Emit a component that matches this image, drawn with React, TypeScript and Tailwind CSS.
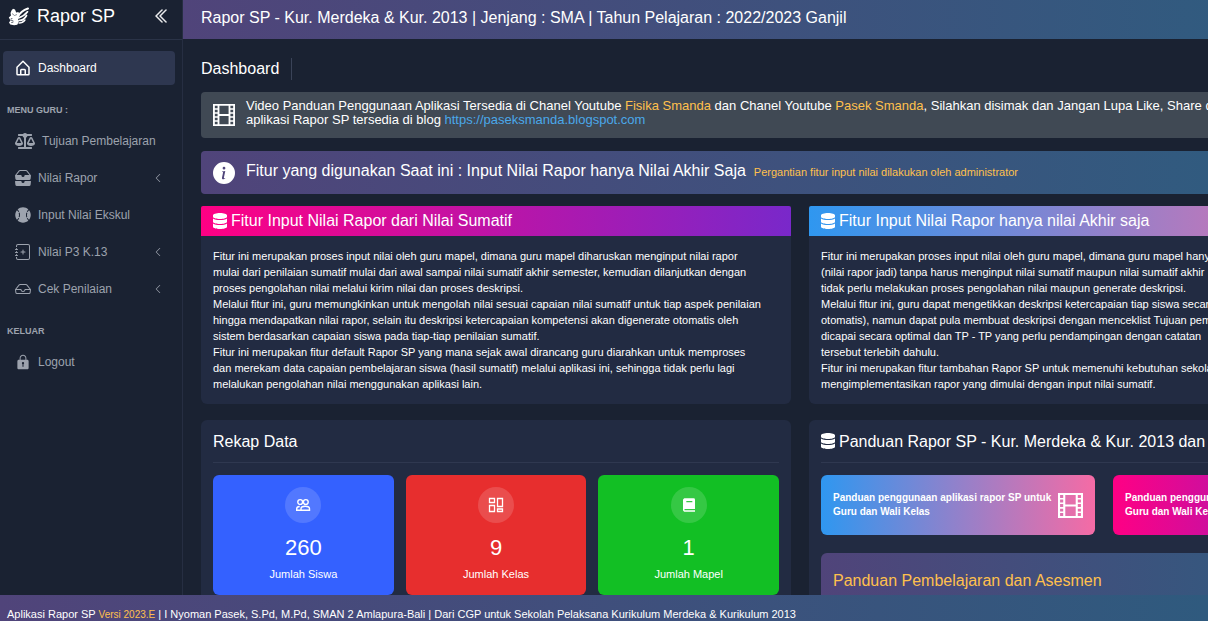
import type { ReactNode } from "react";
import type { IconType } from "react-icons";
import { BiHomeAlt, BiSolidBook } from "react-icons/bi";
import {
  BsChevronDoubleLeft,
  BsChevronLeft,
  BsInbox,
  BsInboxesFill,
  BsInfoCircleFill,
  BsJournalPlus,
} from "react-icons/bs";
import { FaBalanceScale, FaBaseballBall, FaDatabase } from "react-icons/fa";
import { IoIosLock } from "react-icons/io";

const NavItem = ({
  icon: Icon,
  iconClass = "size-4",
  title,
  active,
  hasMenu,
}: {
  icon: IconType;
  iconClass?: string;
  title: string;
  active?: boolean;
  hasMenu?: boolean;
}) => (
  <li>
    <a
      href="#"
      className={
        active
          ? "flex h-[34px] items-center gap-[7px] rounded-sm bg-[#2e3750] px-3 text-xs text-white"
          : "flex h-[34px] items-center gap-[7px] rounded-sm px-3 text-xs text-[#9da3ae] hover:text-white"
      }
    >
      <Icon className={`shrink-0 ${iconClass}`} />
      <span className="whitespace-nowrap">{title}</span>
      {hasMenu && <BsChevronLeft className="ml-auto size-2.5" />}
    </a>
  </li>
);

const NavLabel = ({ children }: { children: ReactNode }) => (
  <h2 className="flex h-[39px] items-center px-1 pt-3 text-[9px] font-bold text-[#9da3ae]">{children}</h2>
);

const Logo = () => (
  <svg viewBox="0 0 22 20" className="h-5 w-[22px]">
    <g fill="none" stroke="#fff" strokeLinecap="round">
      <path d="M10 10.500C12 6.500 15.500 4 20 2.500" strokeWidth="2" />
      <path d="M10.500 12C13.500 11 17.500 8.500 19.500 5.800" strokeWidth="1.700" />
      <path d="M11 14.500c3 0 6-2 7.500-5" strokeWidth="1.700" />
      <path d="M11 17c2.500 0 4.500-1 6-3" strokeWidth="1.300" />
    </g>
    <path
      d="M3.500 4.500 5 2.800l2 .7 1.200 3 2.300-.5 1 3.500-1.500 3.500.8 2.500-1.500 3.200-3.200.6-3.800-.8L1 16.500l1.500-2-1.700-3L3 9.500l-.5-2.500z"
      fill="#fff"
    />
    <path d="M4.500 12.500H3v2h2v2H3M4 7.500l2.500 2L9 8.500" stroke="#1a2232" strokeWidth=".5" fill="none" />
  </svg>
);

const FilmIcon = ({ className }: { className?: string }) => (
  <svg viewBox="0 0 24 24" className={className} fill="none" stroke="currentColor">
    <path d="M1 1h22v22H1zM6 1v22M18 1v22M6 12h12" strokeWidth="2" />
    <path d="M1 5.500h5M1 9.800h5M1 14.200h5M1 18.500h5M18 5.500h5M18 9.800h5M18 14.200h5M18 18.500h5" strokeWidth="1.600" />
  </svg>
);

const GridIcon = ({ className }: { className?: string }) => (
  <svg viewBox="0 0 16 16" className={className} fill="none" stroke="currentColor" strokeWidth="1.3">
    <path d="M1.500 1.500h5v4h-5zM9.500 1.500h5v8h-5zM1.500 8.500h5v6h-5zM9.500 12h5v2.500h-5z" />
  </svg>
);

const PeopleIcon = ({ className }: { className?: string }) => (
  <svg viewBox="0 0 16 16" className={className} fill="none" stroke="currentColor" strokeWidth="1.4">
    <circle cx="5.2" cy="5" r="2.400" />
    <circle cx="10.800" cy="5" r="2.400" />
    <path d="M6 13.300H1.700v-1.500c0-1.400 1.200-2.300 3-2.300M6 13.300v-1.500c0-1.500 2-2.500 4.200-2.500s4.300 1 4.300 2.500v1.500z" />
  </svg>
);

const StatCard = ({
  color,
  icon,
  value,
  label,
}: {
  color: string;
  icon: ReactNode;
  value: number;
  label: string;
}) => (
  <div className={`flex h-[120px] flex-1 flex-col items-center rounded-md pt-3 text-white ${color}`}>
    <div className="flex size-9 items-center justify-center rounded-full bg-white/15">{icon}</div>
    <p className="mt-[13px] text-[22px] leading-6">{value}</p>
    <p className="mt-[6px] text-[11px] leading-4">{label}</p>
  </div>
);

const FeatureCard = ({ title, gradient, lines }: { title: string; gradient: string; lines: string[] }) => (
  <section className="min-w-0 flex-1 rounded-md bg-[#222b42]">
    <h2 className={`flex h-[30px] items-center gap-1 rounded-t-xs px-3 text-base text-white ${gradient}`}>
      <FaDatabase className="h-4 w-[14px]" />
      {title}
    </h2>
    <p className="p-3 text-[11px] leading-4 whitespace-nowrap text-white">
      {lines.map((line) => (
        <span key={line} className="block">
          {line}
        </span>
      ))}
    </p>
  </section>
);

const GuideCard = ({ gradient }: { gradient: string }) => (
  <a href="#" className={`flex h-[60px] flex-1 items-center justify-between rounded-md px-3 text-white ${gradient}`}>
    <span className="text-[10px] leading-[14px] font-bold whitespace-nowrap">
      Panduan penggunaan aplikasi rapor SP untuk
      <br />
      Guru dan Wali Kelas
    </span>
    <FilmIcon className="size-[25px]" />
  </a>
);

const sumatif = [
  "Fitur ini merupakan proses input nilai oleh guru mapel, dimana guru mapel diharuskan menginput nilai rapor",
  "mulai dari penilaian sumatif mulai dari awal sampai nilai sumatif akhir semester, kemudian dilanjutkan dengan",
  "proses pengolahan nilai melalui kirim nilai dan proses deskripsi.",
  "Melalui fitur ini, guru memungkinkan untuk mengolah nilai sesuai capaian nilai sumatif untuk tiap aspek penilaian",
  "hingga mendapatkan nilai rapor, selain itu deskripsi ketercapaian kompetensi akan digenerate otomatis oleh",
  "sistem berdasarkan capaian siswa pada tiap-tiap penilaian sumatif.",
  "Fitur ini merupakan fitur default Rapor SP yang mana sejak awal dirancang guru diarahkan untuk memproses",
  "dan merekam data capaian pembelajaran siswa (hasil sumatif) melalui aplikasi ini, sehingga tidak perlu lagi",
  "melalukan pengolahan nilai menggunakan aplikasi lain.",
];

const akhir = [
  "Fitur ini merupakan proses input nilai oleh guru mapel, dimana guru mapel hanya",
  "(nilai rapor jadi) tanpa harus menginput nilai sumatif maupun nilai sumatif akhir",
  "tidak perlu melakukan proses pengolahan nilai maupun generate deskripsi.",
  "Melalui fitur ini, guru dapat mengetikkan deskripsi ketercapaian tiap siswa secara",
  "otomatis), namun dapat pula membuat deskripsi dengan menceklist Tujuan pembelajaran",
  "dicapai secara optimal dan TP - TP yang perlu pendampingan dengan catatan",
  "tersebut terlebih dahulu.",
  "Fitur ini merupakan fitur tambahan Rapor SP untuk memenuhi kebutuhan sekolah",
  "mengimplementasikan rapor yang dimulai dengan input nilai sumatif.",
];

export default function App() {
  return (
    <div className="flex h-screen flex-col overflow-hidden bg-[#1a2232] font-['Liberation_Sans',Arial,sans-serif]">
      <div className="flex min-h-0 flex-1 overflow-hidden">
        <aside className="w-[183px] shrink-0 border-r border-[#262e42]">
          <div className="flex h-10 items-center border-b border-[#2a3347] px-2 pb-2 text-white">
            <Logo />
            <span className="ml-[7px] text-lg">Rapor SP</span>
            <button type="button" aria-label="Toggle menu" className="mr-1 ml-auto">
              <BsChevronDoubleLeft className="size-4 stroke-white stroke-[0.5]" />
            </button>
          </div>
          <nav className="pt-[11px] pr-[7px] pl-[3px]">
            <ul>
              <NavItem icon={BiHomeAlt} iconClass="size-[18px] -mx-px" title="Dashboard" active />
            </ul>
            <NavLabel>MENU GURU :</NavLabel>
            <ul className="flex flex-col gap-[3px]">
              <NavItem icon={FaBalanceScale} iconClass="h-4 w-5" title="Tujuan Pembelajaran" />
              <NavItem icon={BsInboxesFill} title="Nilai Rapor" hasMenu />
              <NavItem icon={FaBaseballBall} title="Input Nilai Ekskul" />
              <NavItem icon={BsJournalPlus} title="Nilai P3 K.13" hasMenu />
              <NavItem icon={BsInbox} title="Cek Penilaian" hasMenu />
            </ul>
            <NavLabel>KELUAR</NavLabel>
            <ul>
              <NavItem icon={IoIosLock} iconClass="size-[18px] -mx-px" title="Logout" />
            </ul>
          </nav>
        </aside>

        <div className="min-w-[1234px] flex-1">
          <header className="flex h-[39px] items-center bg-linear-to-r/srgb from-[#50447a] to-[#2b5f80] px-[18px] pb-1 text-base text-white">
            Rapor SP - Kur. Merdeka &amp; Kur. 2013 | Jenjang : SMA | Tahun Pelajaran : 2022/2023 Ganjil
          </header>

          <main className="px-[18px] pt-[19px] text-white">
            <h1 className="flex h-[22px] w-fit items-center border-r border-[#3a4358] pr-3 text-base">Dashboard</h1>

            <div className="mt-3 flex h-[46px] items-center gap-[11px] rounded-sm bg-[#404954] px-3">
              <FilmIcon className="size-[22px] shrink-0" />
              <p className="pb-1 text-[13px] leading-[14px] whitespace-nowrap">
                Video Panduan Penggunaan Aplikasi Tersedia di Chanel Youtube{" "}
                <a href="#" className="text-[#ffc04d]">Fisika Smanda</a> dan Chanel Youtube{" "}
                <a href="#" className="text-[#ffc04d]">Pasek Smanda</a>, Silahkan disimak dan Jangan Lupa Like, Share dan
                <br />
                aplikasi Rapor SP tersedia di blog{" "}
                <a href="#" className="text-[#4aa8ea]">https://paseksmanda.blogspot.com</a>
              </p>
            </div>

            <div className="mt-[13px] flex h-[43px] items-center gap-[11px] rounded-sm bg-linear-to-r/srgb from-[#50447a] to-[#2b5f80] px-3">
              <BsInfoCircleFill className="size-[22px] shrink-0" />
              <p className="pb-1 text-base whitespace-nowrap">
                Fitur yang digunakan Saat ini : Input Nilai Rapor hanya Nilai Akhir Saja
                <span className="ml-2 text-[11px] text-[#ffc04d]">
                  Pergantian fitur input nilai dilakukan oleh administrator
                </span>
              </p>
            </div>

            <div className="mt-3 flex gap-[18px]">
              <FeatureCard
                title="Fitur Input Nilai Rapor dari Nilai Sumatif"
                gradient="bg-linear-to-r/srgb from-[#ff0084] to-[#7928ca]"
                lines={sumatif}
              />
              <FeatureCard
                title="Fitur Input Nilai Rapor hanya nilai Akhir saja"
                gradient="bg-linear-to-r/srgb from-[#2f97f0] to-[#f56ba5]"
                lines={akhir}
              />
            </div>

            <div className="mt-4 flex gap-[18px]">
              <section className="min-w-0 flex-1 rounded-md bg-[#222b42] p-3">
                <h2 className="flex h-[31px] items-start border-b border-[#2f3850] text-base leading-5">Rekap Data</h2>
                <div className="mt-3 flex gap-3">
                  <StatCard
                    color="bg-[#3461ff]"
                    icon={<PeopleIcon className="size-4" />}
                    value={260}
                    label="Jumlah Siswa"
                  />
                  <StatCard color="bg-[#e72e2e]" icon={<GridIcon className="size-4" />} value={9} label="Jumlah Kelas" />
                  <StatCard
                    color="bg-[#12bf24]"
                    icon={<BiSolidBook className="size-4" />}
                    value={1}
                    label="Jumlah Mapel"
                  />
                </div>
              </section>

              <section className="min-w-0 flex-1 rounded-md bg-[#222b42] p-3">
                <h2 className="flex h-[31px] items-start gap-1 border-b border-[#2f3850] text-base leading-5 whitespace-nowrap">
                  <FaDatabase className="mt-px h-4 w-[14px] shrink-0" />
                  Panduan Rapor SP - Kur. Merdeka &amp; Kur. 2013 dan Pembelajaran
                </h2>
                <div className="mt-3 flex gap-[18px]">
                  <GuideCard gradient="bg-linear-to-r/srgb from-[#2f97f0] to-[#f56ba5]" />
                  <GuideCard gradient="bg-linear-to-r/srgb from-[#ff0084] to-[#7928ca]" />
                </div>
                <div className="mt-[18px] h-24 rounded-md bg-linear-to-r/srgb from-[#50447a] to-[#2b5f80] px-3 pt-4">
                  <h3 className="text-base text-[#ffc04d]">Panduan Pembelajaran dan Asesmen</h3>
                </div>
              </section>
            </div>
          </main>
        </div>
      </div>

      <footer className="flex h-[26px] shrink-0 items-end bg-linear-to-r/srgb from-[#50447a] to-[#2f5a7e] px-[7px] text-[11px] leading-[13px] whitespace-nowrap text-white">
        <p>
          Aplikasi Rapor SP <span className="text-[10px] text-[#ffc04d]">Versi 2023.E</span> | I Nyoman Pasek, S.Pd,
          M.Pd, SMAN 2 Amlapura-Bali | Dari CGP untuk Sekolah Pelaksana Kurikulum Merdeka &amp; Kurikulum 2013
        </p>
      </footer>
    </div>
  );
}
